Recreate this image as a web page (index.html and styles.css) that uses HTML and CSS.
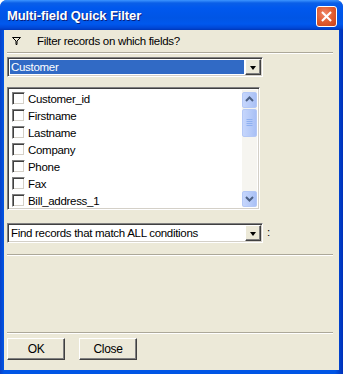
FILE: index.html
```html
<!DOCTYPE html>
<html>
<head>
<meta charset="utf-8">
<link rel="stylesheet" href="styles.css">
</head>
<body>
<div class="window">
  <div class="titlebar">
    <span class="title">Multi-field Quick Filter</span>
    <span class="close-btn">
      <svg width="20" height="20" viewBox="0 0 20 20">
        <path d="M6 6 L14 14 M14 6 L6 14" stroke="#fff" stroke-width="2.2" stroke-linecap="square"/>
      </svg>
    </span>
  </div>
  <div class="client">
    <div class="header">
      <svg class="funnel" width="9" height="8" viewBox="0 0 9 8">
        <path d="M0.5 0.5 H8.5 L5 4 V7.5 H4 V4 Z" fill="none" stroke="#000" stroke-width="1"/>
      </svg>
      <span class="header-text">Filter records on which fields?</span>
    </div>
    <div class="etched"></div>
    <div class="combo combo-table">
      <span class="combo-value selected">Customer</span>
      <span class="combo-btn"><span class="arrow"></span></span>
    </div>
    <div class="listbox">
      <div class="items">
        <div class="item"><span class="check"></span>Customer_id</div>
        <div class="item"><span class="check"></span>Firstname</div>
        <div class="item"><span class="check"></span>Lastname</div>
        <div class="item"><span class="check"></span>Company</div>
        <div class="item"><span class="check"></span>Phone</div>
        <div class="item"><span class="check"></span>Fax</div>
        <div class="item"><span class="check"></span>Bill_address_1</div>
      </div>
      <div class="scrollbar">
        <span class="sb-btn">
          <svg width="15" height="15" viewBox="0 0 15 15"><path d="M4 9 L7.5 5.5 L11 9" fill="none" stroke="#4D6185" stroke-width="2"/></svg>
        </span>
        <span class="sb-thumb">
          <svg width="15" height="28" viewBox="0 0 15 28"><path d="M4.5 10.5 H10.5 M4.5 12.5 H10.5 M4.5 14.5 H10.5 M4.5 16.5 H10.5" stroke="#8EB0F0" stroke-width="1"/></svg>
        </span>
        <span class="sb-track"></span>
        <span class="sb-btn">
          <svg width="15" height="15" viewBox="0 0 15 15"><path d="M4 6 L7.5 9.5 L11 6" fill="none" stroke="#4D6185" stroke-width="2"/></svg>
        </span>
      </div>
    </div>
    <div class="match-row">
      <div class="combo combo-match">
        <span class="combo-value">Find records that match ALL conditions</span>
        <span class="combo-btn"><span class="arrow"></span></span>
      </div>
      <span class="colon">:</span>
    </div>
    <div class="etched etched-mid"></div>
    <div class="spacer"></div>
    <div class="etched etched-bottom"></div>
    <div class="buttons">
      <span class="btn">OK</span>
      <span class="btn">Close</span>
    </div>
  </div>
</div>
</body>
</html>
```

FILE: styles.css
```css
* { box-sizing: border-box; }
html, body { margin: 0; padding: 0; }
body {
  font-family: "Liberation Sans", Arial, sans-serif;
  font-size: 11.5px;
  letter-spacing: -0.3px;
  color: #000;
  background: #fff;
}
.window {
  width: 343px;
  height: 374px;
  display: flex;
  flex-direction: column;
  background: linear-gradient(to right, #0841C8 0%, #0055E5 4px, #0055E5 335px, #0030B8 100%);
  border-radius: 7px 7px 0 0;
  overflow: hidden;
}
.titlebar {
  height: 30px;
  flex: none;
  display: flex;
  align-items: center;
  justify-content: space-between;
  padding: 0 6px 0 7px;
  background: linear-gradient(to bottom, #3D95FF 0px, #0A5FE8 3px, #0058EE 8px, #0055E5 18px, #0058EE 24px, #0047D6 28px, #0037B8 30px);
}
.title {
  color: #fff;
  font-family: "Liberation Sans", Arial, sans-serif;
  font-weight: bold;
  font-size: 13px;
  letter-spacing: -0.1px;
  text-shadow: 1px 1px 0 #0A1E7A;
  margin-top: 1px;
}
.close-btn {
  width: 21px;
  height: 21px;
  border: 1px solid #fff;
  border-radius: 3px;
  background: radial-gradient(circle at 40% 35%, #F0886A 0%, #E05C30 50%, #C8401A 100%);
  display: flex;
  align-items: center;
  justify-content: center;
  margin-top: 2px;
}
.close-btn svg { display: block; width: 19px; height: 19px; }
.client {
  flex: 1;
  margin: 0 4px 4px 4px;
  background: #ECE9D8;
  padding: 0 6px 0 3px;
  display: flex;
  flex-direction: column;
}
.header {
  height: 22px;
  display: flex;
  align-items: center;
  flex: none;
}
.funnel { margin-left: 5px; display: block; }
.header-text { margin-left: 16px; }
.etched {
  height: 2px;
  border-top: 1px solid #ACA899;
  border-bottom: 1px solid #FFFFFF;
  flex: none;
}
.combo {
  height: 20px;
  display: flex;
  align-items: stretch;
  background: #fff;
  border: 1px solid;
  border-color: #808080 #fff #fff #808080;
  box-shadow: inset 1px 1px 0 #404040, inset -1px -1px 0 #D4D0C8;
  padding: 2px;
  flex: none;
}
.combo-table { width: 256px; margin-top: 3px; }
.combo-value {
  flex: 1;
  display: flex;
  align-items: center;
  padding-left: 1px;
}
.combo-value.selected {
  background: #316AC5;
  color: #fff;
  margin-right: 1px;
}
.combo-btn {
  width: 16px;
  background: #ECE9D8;
  border: 1px solid;
  border-color: #fff #404040 #404040 #fff;
  box-shadow: inset -1px -1px 0 #808080;
  display: flex;
  align-items: center;
  justify-content: center;
  margin: -1px -1px -1px 0;
}
.arrow {
  width: 0; height: 0;
  border-left: 3.5px solid transparent;
  border-right: 3.5px solid transparent;
  border-top: 4px solid #000;
  margin-top: 1px;
}
.listbox {
  width: 253px;
  height: 123px;
  margin-top: 10px;
  background: #fff;
  border: 1px solid;
  border-color: #808080 #fff #fff #808080;
  box-shadow: inset 1px 1px 0 #404040, inset -1px -1px 0 #D4D0C8;
  padding: 2px;
  display: flex;
  flex: none;
}
.items {
  flex: 1;
}
.item {
  height: 17px;
  display: flex;
  align-items: center;
  padding-left: 2px;
}
.check {
  width: 13px;
  height: 13px;
  background: #fff;
  border: 1px solid;
  border-color: #808080 #fff #fff #808080;
  box-shadow: inset 1px 1px 0 #404040, inset -1px -1px 0 #D4D0C8;
  margin-right: 3px;
  flex: none;
}
.scrollbar {
  width: 15px;
  display: flex;
  flex-direction: column;
  background: #F4F3EE;
  padding-top: 2px;
}
.sb-btn, .sb-thumb {
  display: block;
  width: 15px;
  background: linear-gradient(to right, #C6D6FC, #B8CCF9 50%, #A9C0F5);
  border: 1px solid #B4C8F6;
  border-radius: 2px;
  flex: none;
}
.sb-btn { height: 16px; }
.sb-btn svg, .sb-thumb svg { display: block; margin: -1px; }
.sb-thumb { height: 28px; margin-top: 1px; }
.sb-track { flex: 1; background: #F6F5F0; }
.match-row {
  display: flex;
  align-items: center;
  margin-top: 13px;
  flex: none;
}
.combo-match { width: 256px; }
.colon { margin-left: 4px; margin-top: -2px; }
.etched-mid { margin-top: 11px; }
.spacer { flex: 1; }
.buttons {
  display: flex;
  gap: 14px;
  margin-top: 4px;
  margin-bottom: 10px;
  flex: none;
}
.btn {
  width: 58px;
  height: 22px;
  display: flex;
  align-items: center;
  justify-content: center;
  border: 1px solid;
  border-color: #fff #404040 #404040 #fff;
  box-shadow: inset -1px -1px 0 #808080;
  background: #ECE9D8;
  font-size: 12px;
}
```
